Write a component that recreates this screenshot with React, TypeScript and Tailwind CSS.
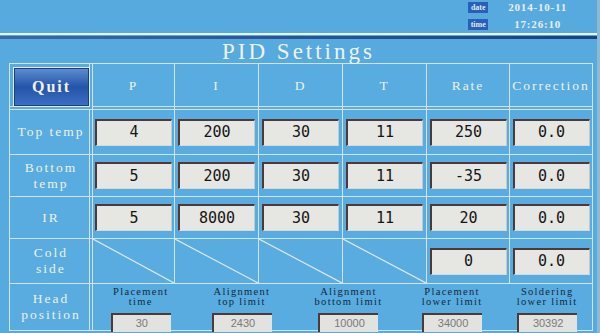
import React from "react"

const serif = { fontFamily: '"Liberation Serif", "DejaVu Serif", serif' }
const monoSans = { fontFamily: '"DejaVu Sans Mono", "Liberation Mono", monospace' }

function ValueBox({ v }: { v: string }) {
  return (
    <div
      className="w-[77px] h-[27px] bg-[#e6e6e2] border-t-2 border-l-2 border-t-[#4e3838] border-l-[#4e3838] border-r border-b border-r-[#c9c9c4] border-b-[#d8d8d4] flex items-center justify-center text-[15px] text-[#151515]"
      style={monoSans}
    >
      {v}
    </div>
  )
}

function Cell({ children, className = "" }: { children?: React.ReactNode; className?: string }) {
  return <div className={`bg-[#58acdf] flex items-center justify-center ${className}`}>{children}</div>
}

// first column has a double rule on its right side
function Label({ lines }: { lines: string[] }) {
  return (
    <Cell className="shadow-[inset_-2px_0_0_0_#58acdf,inset_-3px_0_0_0_#d3e3ec]">
      <div className="text-center text-[13.5px] leading-[16px] tracking-[2px] text-[#eef1e4]" style={serif}>
        {lines.map((l) => (
          <div key={l}>{l}</div>
        ))}
      </div>
    </Cell>
  )
}

function Diagonal() {
  return (
    <div className="bg-[#58acdf] relative">
      <svg className="absolute inset-0 w-full h-full" preserveAspectRatio="none" viewBox="0 0 100 100">
        <line x1="0" y1="0" x2="100" y2="100" stroke="#dbe8ef" strokeWidth="1.2" vectorEffect="non-scaling-stroke" />
      </svg>
    </div>
  )
}

const rows = [
  { label: ["Top temp"], vals: ["4", "200", "30", "11", "250", "0.0"] },
  { label: ["Bottom", "temp"], vals: ["5", "200", "30", "11", "-35", "0.0"] },
  { label: ["IR"], vals: ["5", "8000", "30", "11", "20", "0.0"] },
]

const heads = [
  { w: "w-[96px]", l: ["Placement", "time"], v: "30" },
  { w: "w-[107px]", l: ["Alignment", "top limit"], v: "2430" },
  { w: "w-[107px]", l: ["Alignment", "bottom limit"], v: "10000" },
  { w: "w-[101px]", l: ["Placement", "lower limit"], v: "34000" },
  { w: "w-[90px]", l: ["Soldering", "lower limit"], v: "30392" },
]

export default function App() {
  return (
    <div className="w-[600px] h-[333px] bg-[#57aadd] overflow-hidden border-r-[3px] border-r-[#8fb8d2] relative">
      {/* top bar */}
      <div className="h-[33px] flex justify-end pr-[30px] pt-[1px]">
        <div className="flex flex-col gap-[5px]">
          <div className="flex items-center h-[12px]">
            <span className="w-[20px] h-[11px] bg-[#2a5fb8] text-[8px] leading-[11px] text-[#dfe8f2] text-center font-bold" style={serif}>date</span>
            <span className="ml-[20px] text-[11px] font-bold text-[#e8eef2] tracking-[0.8px]" style={serif}>2014-10-11</span>
          </div>
          <div className="flex items-center h-[12px]">
            <span className="w-[20px] h-[11px] bg-[#2a5fb8] text-[8px] leading-[11px] text-[#dfe8f2] text-center font-bold" style={serif}>time</span>
            <span className="ml-[26px] text-[11px] font-bold text-[#e8eef2] tracking-[0.8px]" style={serif}>17:26:10</span>
          </div>
        </div>
      </div>
      <div className="h-[2px] bg-[#eef4f8]" />
      <div className="h-[1px]" />
      <div className="h-[3px] bg-gradient-to-r from-[#3a68a8] to-[#1c3f86]" />

      {/* title */}
      <div className="h-[24px] flex items-center justify-center text-[23px] tracking-[3px] text-[#eef2ee] pt-[2px]" style={serif}>
        PID Settings
      </div>

      {/* table */}
      <div className="ml-[9px] w-[584px] bg-[#d3e3ec] p-px grid grid-cols-[82px_81px_83px_83px_83px_82px_82px] grid-rows-[45px_44px_41px_41px_44px_46px] gap-px">
        <div className="bg-[#58acdf] pl-[3px] pt-[3px] shadow-[inset_-2px_0_0_0_#58acdf,inset_0_-2px_0_0_#58acdf,inset_-3px_0_0_0_#d3e3ec,inset_0_-3px_0_0_#d3e3ec]">
          <div className="w-[77px] h-[40px] border border-[#e3ecf2] p-px bg-[#1d3f7a]">
            <div
              className="w-full h-full bg-gradient-to-b from-[#5d8bd0] via-[#2454aa] to-[#3a6ec4] flex items-center justify-center text-[16px] font-bold text-[#f2f1e4] tracking-[2px]"
              style={serif}
            >
              Quit
            </div>
          </div>
        </div>
        {["P", "I", "D", "T", "Rate", "Correction"].map((h) => (
          <Cell key={h} className="shadow-[inset_0_-2px_0_0_#58acdf,inset_0_-3px_0_0_#d3e3ec]">
            <span className="text-[13.5px] text-[#eef1e4] tracking-[2px]" style={serif}>{h}</span>
          </Cell>
        ))}

        {rows.map((r) => (
          <React.Fragment key={r.label.join()}>
            <Label lines={r.label} />
            {r.vals.map((v, i) => (
              <Cell key={i}>
                <ValueBox v={v} />
              </Cell>
            ))}
          </React.Fragment>
        ))}

        <Label lines={["Cold", "side"]} />
        <Diagonal />
        <Diagonal />
        <Diagonal />
        <Diagonal />
        <Cell>
          <ValueBox v="0" />
        </Cell>
        <Cell>
          <ValueBox v="0.0" />
        </Cell>

        <Label lines={["Head", "position"]} />
        <div className="col-span-6 bg-[#58acdf] flex">
          {heads.map((h) => (
            <div key={h.v} className={`${h.w} flex flex-col items-center pt-[3px]`}>
              <div className="text-[10.5px] leading-[10px] tracking-[1.3px] text-[#15283a] text-center whitespace-nowrap" style={serif}>
                <div>{h.l[0]}</div>
                <div>{h.l[1]}</div>
              </div>
              <div
                className="mt-[6px] w-[60px] h-[20px] bg-[#e2e2de] border-t-2 border-l-2 border-t-[#4e3838] border-l-[#4e3838] flex items-center justify-center text-[11px] text-[#7a7a7a]"
                style={{ fontFamily: '"Liberation Sans", Arial, sans-serif' }}
              >
                {h.v}
              </div>
            </div>
          ))}
        </div>
      </div>
    </div>
  )
}
